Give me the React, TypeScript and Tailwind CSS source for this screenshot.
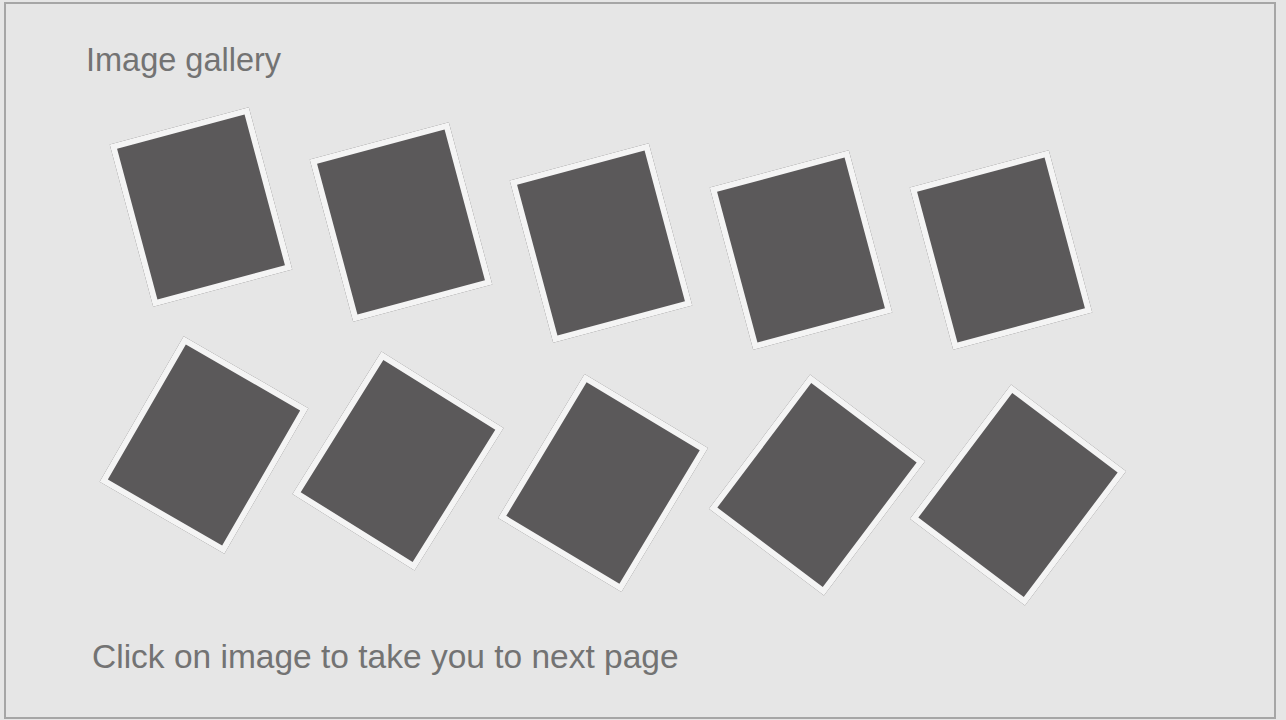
import clsx from "clsx";

type Card = { rotate: string; offset: string; shift?: string };

const topRow: Card[] = [
  { rotate: "-rotate-[15deg]", offset: "mt-0" },
  { rotate: "-rotate-[15deg]", offset: "mt-[15px]" },
  { rotate: "-rotate-[15deg]", offset: "mt-[36px]" },
  { rotate: "-rotate-[15deg]", offset: "mt-[43px]" },
  { rotate: "-rotate-[15deg]", offset: "mt-[43px]" },
];

const bottomRow: Card[] = [
  { rotate: "rotate-[30deg]", offset: "mt-0" },
  { rotate: "rotate-[32deg]", offset: "mt-[16px]", shift: "translate-x-[-6px]" },
  { rotate: "rotate-[31deg]", offset: "mt-[38px]", shift: "translate-x-[-1px]" },
  { rotate: "rotate-[37deg]", offset: "mt-[40px]", shift: "translate-x-[13px]" },
  { rotate: "rotate-[37deg]", offset: "mt-[50px]", shift: "translate-x-[14px]" },
];

function Photo({ card }: { card: Card }) {
  return (
    <button
      type="button"
      className={clsx(
        "h-[168px] w-[144px] shrink-0 cursor-pointer border-[6px] border-[#f4f4f4] bg-[#5b595a]",
        card.rotate,
        card.offset,
        card.shift,
      )}
    />
  );
}

export default function App() {
  return (
    <div className="h-[720px] w-[1286px] overflow-hidden bg-[#e6e6e6] pl-[4px] pt-[2px] font-['Liberation_Sans',Arial,sans-serif] text-[#737373]">
      <div className="h-[717px] w-[1272px] border-2 border-[#a6a6a6]">
        <h1 className="ml-[80px] mt-[40px] text-[32.5px] font-normal leading-none">Image gallery</h1>

        <div className="ml-[123px] mt-[46px] flex items-start gap-[56px]">
          {topRow.map((card, i) => (
            <Photo key={i} card={card} />
          ))}
        </div>

        <div className="ml-[126px] mt-[27px] flex items-start gap-[56px]">
          {bottomRow.map((card, i) => (
            <Photo key={i} card={card} />
          ))}
        </div>

        <p className="ml-[86px] mt-[61px] text-[33.5px] leading-none">Click on image to take you to next page</p>
      </div>
    </div>
  );
}
